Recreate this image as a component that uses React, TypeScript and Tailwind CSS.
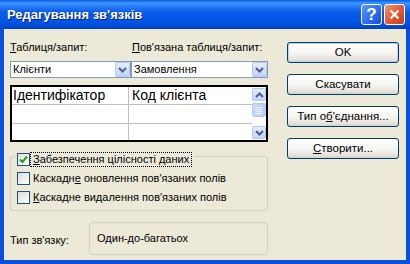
import type { ReactNode } from 'react'

const font = "font-['Liberation_Sans',Arial,sans-serif]"

function Chevron({ up }: { up?: boolean }) {
  return (
    <svg width="9" height="6" viewBox="0 0 9 6">
      <path
        d={up ? 'M1 5L4.5 1.5L8 5' : 'M1 1L4.5 4.5L8 1'}
        fill="none"
        stroke="#4D6185"
        strokeWidth="2"
      />
    </svg>
  )
}

function ArrowBtn({ up, className = '' }: { up?: boolean; className?: string }) {
  return (
    <span
      className={`flex items-center justify-center rounded-[2px] border border-[#B4C8F6] bg-[linear-gradient(to_bottom,#E6EEFE,#C3D4FC)] ${className}`}
    >
      <Chevron up={up} />
    </span>
  )
}

function Combo({ text, width }: { text: string; width: string }) {
  return (
    <div className={`${width} h-[17px] border border-[#7F9DB9] bg-white flex items-center`}>
      <span className="flex-1 pl-[2px] text-[11px] text-black">{text}</span>
      <ArrowBtn className="w-[15px] h-[15px]" />
    </div>
  )
}

function Check({ checked }: { checked?: boolean }) {
  return (
    <span className="w-[13px] h-[13px] shrink-0 border border-[#1C5180] bg-[linear-gradient(135deg,#DCDCD7,#FFFFFF)] flex items-center justify-center">
      {checked && (
        <svg width="9" height="9" viewBox="0 0 9 9">
          <path d="M1 4.5L3.5 7L8 1.5" stroke="#21A121" strokeWidth="2" fill="none" />
        </svg>
      )}
    </span>
  )
}

function Btn({ children, def }: { children: ReactNode; def?: boolean }) {
  return (
    <button
      className={`w-[112px] h-[21px] rounded-[3px] border border-[#003C74] bg-[linear-gradient(to_bottom,#FFFFFF,#F4F4F0_55%,#E6E3DB_85%,#D6D0C5)] text-[11.5px] text-black flex items-center justify-center ${
        def ? 'shadow-[inset_0_0_0_1px_#BCD1F8]' : ''
      }`}
    >
      {children}
    </button>
  )
}

export default function App() {
  return (
    <div className={`w-[410px] h-[264px] flex flex-col overflow-hidden ${font}`}>
      {/* title bar */}
      <div className="h-[29px] shrink-0 flex items-center pl-[7px] pr-[5px] bg-[linear-gradient(to_bottom,#0A5BE0_0px,#3D95FF_3px,#2A80F7_6px,#0A5CE9_12px,#0055E4_22px,#0049D2_27px,#003FBF_29px)]">
        <span className="flex-1 text-white font-bold text-[13px] [text-shadow:1px_1px_#0A1A8C]">
          Редагування зв'язків
        </span>
        <div className="flex gap-[2px]">
          <span className="w-[21px] h-[21px] rounded-[3px] border border-white bg-[linear-gradient(135deg,#5B9BFF,#2A67F0_60%,#1D4FD8)] flex items-center justify-center text-white font-bold text-[17px] leading-none">
            ?
          </span>
          <span className="w-[21px] h-[21px] rounded-[3px] border border-white bg-[linear-gradient(135deg,#F0977A,#E1552F_55%,#C6401C)] flex items-center justify-center">
            <svg width="11" height="11" viewBox="0 0 11 11">
              <path d="M1.5 1.5L9.5 9.5M9.5 1.5L1.5 9.5" stroke="white" strokeWidth="2.2" />
            </svg>
          </span>
        </div>
      </div>

      {/* body */}
      <div className="flex-1 flex bg-[#ECE9D8] border-x-4 border-b-4 border-[#0A4FDE] pl-[6px] pr-[7px] pt-[11px]">
        <div className="w-[258px] flex flex-col">
          <div className="flex text-[11px] leading-[14px] text-black">
            <span className="w-[122px]">
              <u>Т</u>аблиця/запит:
            </span>
            <span>
              <u>П</u>ов'язана таблиця/запит:
            </span>
          </div>
          <div className="flex mt-[7px]">
            <Combo text="Клієнти" width="w-[121px]" />
            <Combo text="Замовлення" width="w-[137px]" />
          </div>

          {/* grid */}
          <div className="mt-[7px] h-[57px] border-2 border-black bg-white flex">
            <div className="flex-1 flex flex-col text-[14px] text-black">
              <div className="flex h-[18px] border-b border-[#C0C0C0]">
                <span className="w-[117px] border-r border-[#C0C0C0] pl-[1px] leading-[17px]">
                  Ідентифікатор
                </span>
                <span className="flex-1 pl-[3px] leading-[17px]">Код клієнта</span>
              </div>
              <div className="flex h-[19px] border-b border-[#C0C0C0]">
                <span className="w-[117px] border-r border-[#C0C0C0]" />
              </div>
              <div className="flex flex-1">
                <span className="w-[117px] border-r border-[#C0C0C0]" />
              </div>
            </div>
            <div className="w-[14px] flex flex-col bg-[#FBFBF9] py-[1px]">
              <ArrowBtn up className="h-[13px]" />
              <span className="mt-[2px] h-[14px] rounded-[2px] border border-[#B4C8F6] bg-[linear-gradient(to_right,#C9D8FC,#B9CDFC)] flex flex-col items-center justify-center gap-[1px]">
                <span className="w-[6px] h-px bg-[#EEF3FE]" />
                <span className="w-[6px] h-px bg-[#EEF3FE]" />
                <span className="w-[6px] h-px bg-[#EEF3FE]" />
                <span className="w-[6px] h-px bg-[#EEF3FE]" />
              </span>
              <span className="flex-1" />
              <ArrowBtn className="h-[13px]" />
            </div>
          </div>

          {/* group */}
          <div className="mt-[14px] h-[55px] rounded-[3px] border border-[#D0D0BF] pl-[6px] flex flex-col gap-[6px] text-[11px] text-black">
            <div className="-mt-[4px] h-[13px] flex items-center self-start bg-[#ECE9D8] pr-[3px]">
              <Check checked />
              <span className="ml-[1px] px-[2px] outline outline-1 outline-dotted outline-black leading-[13px]">
                <u>З</u>абезпечення цілісності даних
              </span>
            </div>
            <div className="h-[13px] flex items-center">
              <Check />
              <span className="ml-[3px]">
                Каскадн<u>е</u> оновлення пов'язаних полів
              </span>
            </div>
            <div className="h-[13px] flex items-center">
              <Check />
              <span className="ml-[3px]">
                <u>К</u>аскадне видалення пов'язаних полів
              </span>
            </div>
          </div>

          {/* relationship type */}
          <div className="mt-[11px] flex items-center text-[11px] text-black">
            <span className="w-[79px] pt-[3px]">Тип зв'язку:</span>
            <div className="flex-1 h-[33px] rounded-[4px] border border-[#D0D0BF] pl-[7px] pt-[8px] leading-[14px]">
              Один-до-багатьох
            </div>
          </div>
        </div>

        <div className="ml-[19px] mt-[2px] flex flex-col gap-[11px]">
          <Btn def>OK</Btn>
          <Btn>Скасувати</Btn>
          <Btn>
            Тип о<u>б</u>'єднання...
          </Btn>
          <Btn>
            <u>С</u>творити...
          </Btn>
        </div>
      </div>
    </div>
  )
}
